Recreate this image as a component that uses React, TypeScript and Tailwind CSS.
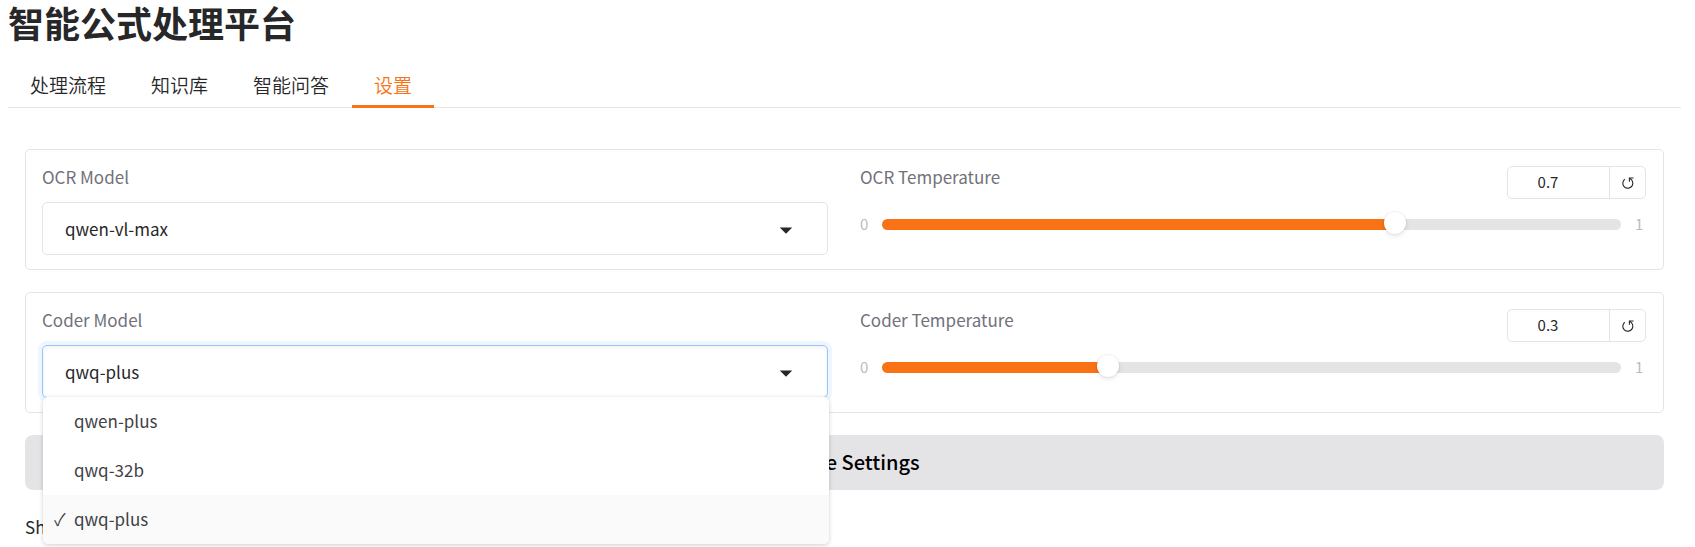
import { useState } from "react";

const tabs = ["处理流程", "知识库", "智能问答", "设置"];
const ocrModels = ["qwen-vl-max", "qwen-vl-plus"];
const coderModels = ["qwen-plus", "qwq-32b", "qwq-plus"];

function CaretIcon() {
  return (
    <svg
      viewBox="0 0 18 18"
      aria-hidden="true"
      className="pointer-events-none absolute top-[13px] right-7 size-7 fill-[#27272a]"
    >
      <path d="M5 8l4 4 4-4z" />
    </svg>
  );
}

function ResetIcon() {
  return (
    <svg
      viewBox="0 0 12 12"
      aria-hidden="true"
      className="size-3 fill-none stroke-[#27272a] stroke-[1.1]"
    >
      <path d="M2.8 2.2A5 5 0 1 0 9.6 2.9L7.6 1.1" />
      <path d="M11.5 1H7.4V4.8" />
    </svg>
  );
}

type ModelSelectProps = {
  id: string;
  label: string;
  options: string[];
  initial: string;
  initiallyOpen?: boolean;
};

function ModelSelect({ id, label, options, initial, initiallyOpen = false }: ModelSelectProps) {
  const [value, setValue] = useState(initial);
  const [open, setOpen] = useState(initiallyOpen);

  return (
    <div className="min-w-0 flex-1">
      <label htmlFor={id} className="block text-[17px] leading-[22px] text-[#71717a]">
        {label}
      </label>
      <div className="relative mt-3.5">
        <select
          id={id}
          value={value}
          onChange={(e) => setValue(e.target.value)}
          onMouseDown={(e) => {
            e.preventDefault();
            setOpen(!open);
          }}
          className={
            open
              ? "block h-[53px] w-full appearance-none rounded-[5px] border border-[#93c5fd] bg-white px-[22px] text-[17px] text-[#27272a] shadow-[0_0_0_4px_#eff6ff,inset_0_2px_4px_0_rgb(0_0_0/0.05)] outline-none"
              : "block h-[53px] w-full appearance-none rounded-[5px] border border-[#e4e4e7] bg-white px-[22px] text-[17px] text-[#27272a] outline-none"
          }
        >
          {options.map((o) => (
            <option key={o}>{o}</option>
          ))}
        </select>
        <CaretIcon />
        {open && (
          <ul
            role="listbox"
            aria-label={label}
            className="absolute top-full left-px z-10 -mt-px w-full overflow-hidden rounded-[5px] bg-white shadow-[0_1px_4px_0_rgb(0_0_0/0.2)]"
          >
            {options.map((o) => (
              <li
                key={o}
                role="option"
                aria-selected={o === value}
                onClick={() => {
                  setValue(o);
                  setOpen(false);
                }}
                className="flex h-[49px] cursor-pointer items-center px-[11px] pb-0.5 text-[17px] text-[#3f3f46] aria-selected:bg-[#fafafa]"
              >
                <span aria-hidden="true" className="w-5">
                  {o === value ? "✓" : ""}
                </span>
                {o}
              </li>
            ))}
          </ul>
        )}
      </div>
    </div>
  );
}

function TemperatureSlider({ id, label, initial }: { id: string; label: string; initial: number }) {
  const [value, setValue] = useState(initial);
  const percent = value * 100;

  return (
    <div className="min-w-0 flex-1">
      <div className="flex items-start justify-between">
        <label htmlFor={id} className="text-[17px] leading-[22px] text-[#71717a]">
          {label}
        </label>
        <div className="flex h-[33px] overflow-hidden rounded-[5px] border border-[#e4e4e7]">
          <input
            type="number"
            aria-label={`${label} value`}
            min={0}
            max={1}
            step={0.1}
            value={value}
            onChange={(e) => setValue(Number(e.target.value))}
            className="w-[101px] pr-3.5 pl-2 text-center text-[15px] text-[#27272a] outline-none"
          />
          <button
            type="button"
            aria-label={`Reset ${label}`}
            onClick={() => setValue(initial)}
            className="flex w-9 items-center justify-center border-l border-[#e4e4e7]"
          >
            <ResetIcon />
          </button>
        </div>
      </div>
      <div className="mt-[15px] flex items-center text-[15px] leading-5 text-[#bbbbc2]">
        <span className="w-[22px]">0</span>
        <input
          id={id}
          type="range"
          min={0}
          max={1}
          step={0.1}
          value={value}
          onChange={(e) => setValue(Number(e.target.value))}
          style={{
            backgroundImage: `linear-gradient(to right, #f97316 ${percent}%, #e4e4e7 ${percent}%)`,
          }}
          className="h-[11px] min-w-0 flex-1 appearance-none rounded-full outline-none [&::-webkit-slider-runnable-track]:h-[11px] [&::-webkit-slider-thumb]:-mt-[7px] [&::-webkit-slider-thumb]:size-[22px] [&::-webkit-slider-thumb]:appearance-none [&::-webkit-slider-thumb]:rounded-full [&::-webkit-slider-thumb]:bg-white [&::-webkit-slider-thumb]:shadow-[0_0_0_1px_rgb(0_0_0/0.04),0_2px_5px_rgb(0_0_0/0.1)]"
        />
        <span className="w-[25px] pl-3.5">1</span>
      </div>
    </div>
  );
}

export default function App() {
  const [active, setActive] = useState("设置");

  return (
    <main className="min-h-screen bg-white px-2 font-['Noto_Sans_CJK_SC',sans-serif] text-[#27272a]">
      <h1 className="text-4xl leading-[44px] font-bold">智能公式处理平台</h1>
      <div role="tablist" className="mt-4 mr-1.5 flex gap-px border-b border-[#e4e4e7]">
        {tabs.map((t) => (
          <button
            key={t}
            type="button"
            role="tab"
            aria-selected={t === active}
            onClick={() => setActive(t)}
            className="-mb-px h-12 border-b-[3px] border-transparent px-[22px] pt-1.5 text-[19px] font-[350] aria-selected:border-[#f97316] aria-selected:text-[#f97316]"
          >
            {t}
          </button>
        ))}
      </div>
      <div className="flex flex-col gap-[22px] pt-[41px] pr-[23px] pl-[17px]">
        <section className="flex h-[121px] gap-8 rounded-[5px] border border-[#e4e4e7] py-4 pr-[17px] pl-4">
          <ModelSelect id="ocr-model" label="OCR Model" options={ocrModels} initial="qwen-vl-max" />
          <TemperatureSlider id="ocr-temperature" label="OCR Temperature" initial={0.7} />
        </section>
        <section className="flex h-[121px] gap-8 rounded-[5px] border border-[#e4e4e7] py-4 pr-[17px] pl-4">
          <ModelSelect
            id="coder-model"
            label="Coder Model"
            options={coderModels}
            initial="qwq-plus"
            initiallyOpen
          />
          <TemperatureSlider id="coder-temperature" label="Coder Temperature" initial={0.3} />
        </section>
        <button
          type="button"
          className="h-[55px] rounded-lg bg-[#e4e4e7] pb-0.5 pl-[22px] text-xl font-medium text-black"
        >
          Save Settings
        </button>
        <p className="text-[17px] leading-[30px]">Sh</p>
      </div>
    </main>
  );
}
